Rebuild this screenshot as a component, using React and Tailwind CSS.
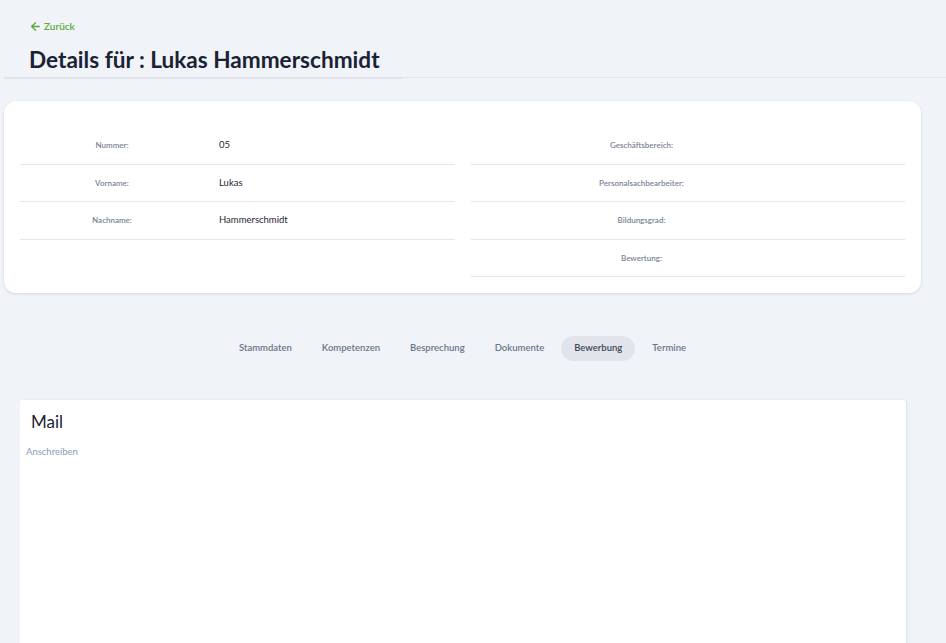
import { ArrowLeft } from "lucide-react";

export default function App() {
  const left = [
    { label: "Nummer:", value: "05" },
    { label: "Vorname:", value: "Lukas" },
    { label: "Nachname:", value: "Hammerschmidt" },
  ];
  const right = ["Geschäftsbereich:", "Personalsachbearbeiter:", "Bildungsgrad:", "Bewertung:"];
  const tabs = ["Stammdaten", "Kompetenzen", "Besprechung", "Dokumente", "Bewerbung", "Termine"];

  return (
    <div className="min-h-[643px] bg-[#f0f3f8] font-['Lato',sans-serif] overflow-hidden">
      {/* header */}
      <div className="pt-[19px] px-[29px]">
        <a href="#" className="flex items-center gap-[2px] text-[10px] font-semibold text-[#5fa83a]">
          <ArrowLeft size={13} strokeWidth={2.5} />
          Zurück
        </a>
        <h1 className="mt-[11px] text-[22.6px] font-bold leading-[30px] text-[#1a2234]">
          Details für : Lukas Hammerschmidt
        </h1>
      </div>
      <div className="mt-[2px] flex pl-[4px]">
        <div className="w-[399px] h-[2px] bg-[#e0e4ea]" />
        <div className="flex-1 h-[1px] bg-[#e4e8ee]" />
      </div>

      {/* info card */}
      <div className="mt-[22px] ml-[4px] w-[917px] rounded-[12px] bg-white shadow-[0_1px_3px_rgba(0,0,0,0.12)] px-[16px] pt-[26px] pb-[16px] flex gap-[16px]">
        <div className="w-[435px] self-start">
          {left.map((r) => (
            <div key={r.label} className="flex h-[37.5px] items-center border-b border-[#e2e6ee]">
              <div className="w-[184px] text-center text-[8px] font-semibold text-[#7a8496]">{r.label}</div>
              <div className="pl-[15px] text-[9.5px] text-[#1f2533]">{r.value}</div>
            </div>
          ))}
        </div>
        <div className="w-[435px]">
          {right.map((l) => (
            <div key={l} className="flex h-[37.5px] items-center border-b border-[#e2e6ee]">
              <div className="w-[342px] text-center text-[8px] font-semibold text-[#7a8496]">{l}</div>
            </div>
          ))}
        </div>
      </div>

      {/* tabs */}
      <div className="mt-[43px] flex justify-center gap-[4px] pr-[21px]">
        {tabs.map((t) => (
          <button
            key={t}
            className={
              "h-[25px] rounded-full px-[13px] text-[9.5px] font-semibold " +
              (t === "Bewerbung" ? "bg-[#e1e5eb] text-[#3e4657]" : "text-[#6b7588]")
            }
          >
            {t}
          </button>
        ))}
      </div>

      {/* mail card */}
      <div className="mt-[39px] ml-[20px] w-[886px] h-[260px] bg-white rounded-t-[3px] shadow-[1px_0_2px_rgba(0,0,0,0.08)] pt-[10px]">
        <h2 className="pl-[11px] text-[17px] text-[#1a2234] leading-[24px]">Mail</h2>
        <p className="mt-[11px] pl-[6px] text-[9.5px] text-[#8a9bbb]">Anschreiben</p>
      </div>
    </div>
  );
}
